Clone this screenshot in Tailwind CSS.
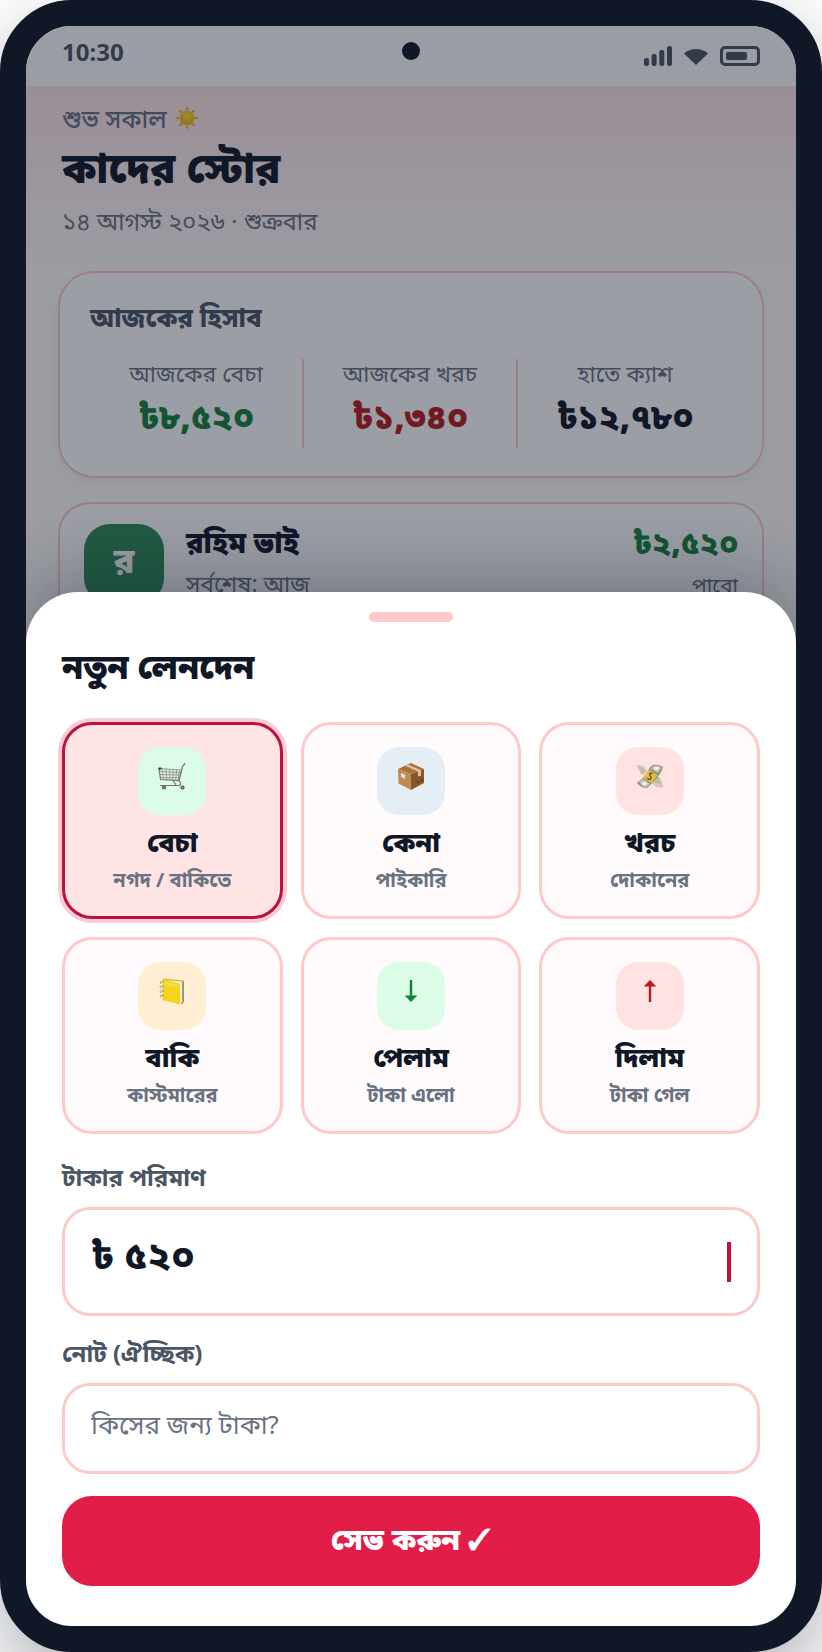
<!DOCTYPE html>
<html lang="bn">
<head>
<meta charset="utf-8">
<meta name="viewport" content="width=device-width, initial-scale=1">
<title>কাদের স্টোর</title>
<script src="https://cdn.jsdelivr.net/npm/@tailwindcss/browser@4"></script>
</head>
<body class="bg-white font-['Noto_Sans','Noto_Sans_Bengali',sans-serif] text-gray-900">
<div class="relative isolate grid min-h-screen overflow-hidden rounded-[72px] border-[26px] border-gray-900 bg-[#fffdfb] shadow-[0_30px_80px_rgba(17,24,39,0.35)]">

  <!-- Home screen -->
  <main class="col-start-1 row-start-1 flex min-w-0 flex-col">
    <div class="relative flex h-[60px] items-start justify-between bg-white/50 px-9 pt-3 text-gray-600">
      <span class="text-2xl leading-7 font-bold">10:30</span>
      <span class="absolute top-4 left-1/2 size-[18px] -translate-x-1/2 rounded-full bg-gray-900"></span>
      <span class="flex items-center gap-3 pt-2">
        <svg class="h-5 w-7" viewBox="0 0 28 20" fill="currentColor" aria-hidden="true"><rect x="0" y="12" width="5" height="8" rx="2"/><rect x="7.6" y="8" width="5" height="12" rx="2"/><rect x="15.3" y="4" width="5" height="16" rx="2"/><rect x="23" y="0" width="5" height="20" rx="2"/></svg>
        <svg class="h-5 w-6" viewBox="0 0 24 20" fill="currentColor" aria-hidden="true"><path d="M0 7.500Q5 3 12 3T24 7.500L12 19Z"/></svg>
        <svg class="h-5 w-10" viewBox="0 0 40 20" aria-hidden="true"><rect x="1.500" y="1.500" width="37" height="17" rx="3.500" fill="none" stroke="currentColor" stroke-width="3"/><rect x="6" y="6" width="21" height="8" rx="2" fill="currentColor"/></svg>
      </span>
    </div>

    <header class="bg-linear-to-b from-[#ffe4e6] to-transparent px-9 pt-3 pb-[30px]">
      <p class="flex items-center gap-2 text-[25px] leading-10 font-medium text-gray-500">শুভ সকাল
        <svg class="size-6" viewBox="0 0 24 24" role="img" aria-label="সূর্য"><defs><radialGradient id="sun" cx=".5" cy=".35" r=".6"><stop offset="0" stop-color="#ffe34a"/><stop offset="1" stop-color="#f5b400"/></radialGradient></defs><path fill="#f5a81c" d="M12 0l1.500 4h-3zM12 24l1.500-4h-3zM0 12l4-1.500v3zM24 12l-4-1.500v3zM3.500 3.500l4 1.800-2.200 2.200zM20.500 3.500l-4 1.800 2.200 2.200zM3.500 20.500l4-1.800-2.200-2.200zM20.500 20.500l-4-1.800 2.200-2.200z"/><circle cx="12" cy="12" r="7.300" fill="url(#sun)"/></svg>
      </p>
      <h1 class="text-[42px] leading-[58px] font-black">কাদের স্টোর</h1>
      <p class="mt-[5px] text-2xl leading-10 text-gray-500">১৪ আগস্ট ২০২৬ · শুক্রবার</p>
    </header>

    <section class="mx-8 rounded-[36px] border-2 border-red-200 bg-white px-[30px] pt-6 pb-7 shadow-[0_4px_12px_rgba(17,24,39,0.05)]">
      <h2 class="text-[26px] leading-10 font-extrabold text-gray-600">আজকের হিসাব</h2>
      <div class="mt-[22px] grid grid-cols-3 text-center">
        <div class="border-r-2 border-red-200 pb-[5px]">
          <p class="text-[23px] leading-7 text-gray-500">আজকের বেচা</p>
          <p class="mt-0.5 text-[34px] leading-[54px] font-black text-[#15803d]">৳৮,৫২০</p>
        </div>
        <div class="border-r-2 border-red-200 pb-[5px]">
          <p class="text-[23px] leading-7 text-gray-500">আজকের খরচ</p>
          <p class="mt-0.5 text-[34px] leading-[54px] font-black text-[#b91c1c]">৳১,৩৪০</p>
        </div>
        <div class="pb-[5px]">
          <p class="text-[23px] leading-7 text-gray-500">হাতে ক্যাশ</p>
          <p class="mt-0.5 text-[34px] leading-[54px] font-black">৳১২,৭৮০</p>
        </div>
      </div>
    </section>

    <section class="mx-8 mt-6 flex gap-[22px] rounded-[32px] border-2 border-red-200 bg-white px-6 py-5">
      <div class="flex size-20 shrink-0 items-center justify-center rounded-[26px] bg-[#2e8b57] pb-2 text-[34px] font-black text-white">র</div>
      <div class="flex-1">
        <p class="text-[29px] leading-9 font-black">রহিম ভাই</p>
        <p class="mt-[3px] text-[23px] leading-10 text-gray-500">সর্বশেষ: আজ</p>
      </div>
      <div class="text-right">
        <p class="text-[31px] leading-9 font-black text-[#15803d]">৳২,৫২০</p>
        <p class="mt-[5px] text-[21px] leading-10 text-gray-500">পাবো</p>
      </div>
    </section>
  </main>

  <!-- Backdrop -->
  <div class="absolute inset-0 bg-gray-900/42"></div>

  <!-- New transaction sheet -->
  <form class="relative z-10 col-start-1 row-start-1 flex min-w-0 flex-col self-end rounded-t-[52px] rounded-b-[46px] bg-white px-9 pt-5 pb-10 shadow-[0_-20px_60px_rgba(17,24,39,0.25)]">
    <div class="h-2.5 w-[84px] self-center rounded-full bg-red-200"></div>
    <h2 class="mt-4 text-[34px] leading-[56px] font-black">নতুন লেনদেন</h2>

    <div class="mt-7 grid grid-cols-3 gap-[18px]">
      <button type="button" aria-pressed="true" class="flex h-[197px] flex-col items-center rounded-[30px] border-3 border-[#be123c] bg-[#ffe4e6] pt-[22px] ring-4 ring-[#e11d48]/22">
        <span class="flex size-[68px] items-start justify-center rounded-[22px] bg-green-100 pt-[15px]">
          <svg class="size-7" viewBox="0 0 28 28" fill="none" aria-hidden="true"><path d="M1 6.500L24 8M1.500 9.500l22 1M2 12.500l21 .5M2 15.500l20 .3M4.500 6.700l1 11M8 7l.8 11M11.500 7.200l.5 11M15 7.400l-.2 11M18.500 7.600l-.8 10.800M21.500 8l-1.300 10" stroke="#8a8380" stroke-width=".8"/><path d="M1 6l1.500 11.500 18.500 1L24.500 4.500 27 1.500M21 18.500c2 1.500 2 4 .5 5L2 23.500M15 18.500l3 4.500" stroke="#77706e" stroke-width="1.200"/><path d="M.5 5.500h3v2h-3z" fill="#2b3444"/><circle cx="6" cy="25.500" r="2.100" fill="#5f5553"/><circle cx="24.500" cy="25.500" r="2.100" fill="#5f5553"/><circle cx="6" cy="25.500" r=".7" fill="#c9c2bf"/><circle cx="24.500" cy="25.500" r=".7" fill="#c9c2bf"/></svg>
        </span>
        <span class="mt-[7px] text-[27px] leading-10 font-black">বেচা</span>
        <span class="mt-0.5 text-xl leading-8 font-bold text-gray-500">নগদ / বাকিতে</span>
      </button>
      <button type="button" class="flex h-[197px] flex-col items-center rounded-[30px] border-3 border-red-200 bg-[#fffbfc] pt-[22px]">
        <span class="flex size-[68px] items-start justify-center rounded-[22px] bg-[#e5edf5] pt-[15px]">
          <svg class="size-7" viewBox="0 0 28 28" aria-hidden="true"><path fill="#c08a55" d="M1 7l13 5v16L1.500 21.500z"/><path fill="#8a5628" d="M14 12l13-5v14L14 28z"/><path fill="#a9713c" d="M1 7L14 1l13 6-13 5z"/><path fill="#dcc3a5" d="M8 3.800l13 5.800v5l3-1.200V8.300L11 2.500z"/><path fill="#e8e2da" d="M4 11l4 1.800v4L4 15z"/><path fill="#5c3717" d="M20 19.500l2-1v2l-2 1zM23.500 18l2-1v2l-2 1z"/></svg>
        </span>
        <span class="mt-[7px] text-[27px] leading-10 font-black">কেনা</span>
        <span class="mt-0.5 text-xl leading-8 font-bold text-gray-500">পাইকারি</span>
      </button>
      <button type="button" class="flex h-[197px] flex-col items-center rounded-[30px] border-3 border-red-200 bg-[#fffbfc] pt-[22px]">
        <span class="flex size-[68px] items-start justify-center rounded-[22px] bg-red-100 pt-[15px]">
          <svg class="size-7" viewBox="0 0 28 28" aria-hidden="true"><path fill="#cfc9b8" d="M1 3c4-1 8 1 10 6l-4 4C4 12 3 10 4 9 2 8 1.500 6 2.500 5.500 1 5 .5 4 1 3zM27 25c-4 1.500-8 .5-11-4l4-7c3 .5 5 2 4 3.500 2 .8 2.500 2.500 1.500 3.500 1.500.8 2 2.500 1.500 4z"/><path stroke="#9b9688" stroke-width=".6" fill="none" d="M3 5.500l6 3M4.500 9l4 1.500M25 21.500l-6-2.500M24 17.500l-4-1"/><path fill="#8d9180" d="M15 4q5-3 12 1-2 9-16 21-6 0-10-5 2-2 6-5Q12 10 15 4z"/><path fill="#c3c7b6" d="M16 4.500q5-2 9.500 1L22 11l-7-4zM3 20l4-3.500 7 5.500-4 3.500q-4-1-7-5.500z"/><ellipse cx="20.500" cy="6.300" rx="2.600" ry="1.700" fill="#f0f1e8"/><ellipse cx="8.500" cy="21.500" rx="2.600" ry="1.800" fill="#f0f1e8"/><path fill="#e9b83a" d="M12.500 7.500l9 5.500-1.500 2.200-9-5.500zM8.500 13.500l8.500 6-1.500 2-8.500-6z"/><path fill="#e5bf55" d="M11 9.700l9 5.500-3 4.300-8.500-6z"/><path stroke="#5b4a1a" stroke-width="1.300" fill="none" d="M16.500 11.500c-2-1-3.500.5-2.500 2s2 2.500.5 3.500-2.500 0-3-1"/></svg>
        </span>
        <span class="mt-[7px] text-[27px] leading-10 font-black">খরচ</span>
        <span class="mt-0.5 text-xl leading-8 font-bold text-gray-500">দোকানের</span>
      </button>
      <button type="button" class="flex h-[197px] flex-col items-center rounded-[30px] border-3 border-red-200 bg-[#fffbfc] pt-[22px]">
        <span class="flex size-[68px] items-start justify-center rounded-[22px] bg-orange-100 pt-[15px]">
          <svg class="size-7" viewBox="0 0 28 28" aria-hidden="true"><path fill="#b98f1d" d="M23 27.500L26 25V4l-3 1z"/><path fill="#e6e8ec" d="M6 2.500L25 4v20l-2 2z"/><path fill="#8f9db0" d="M24 4.500v20l1-1V4.300z"/><path fill="#d9b40c" d="M4.500 1.500L26 3.500v1L6 3z"/><path fill="#f3d51c" d="M4.500 2L22 7v20.500L4.500 23z"/><path fill="#fae75a" d="M6 4l14 4v3L6 7z" opacity=".5"/><path stroke="#8e8b7c" stroke-width="1" fill="none" d="M6 5.500C3 3.500 1 5.500 3 7M6 10C3 8 1 10 3 11.500M6 14.500c-3-2-5 0-3 1.500M6 19c-3-2-5 0-3 1.500"/></svg>
        </span>
        <span class="mt-[7px] text-[27px] leading-10 font-black">বাকি</span>
        <span class="mt-0.5 text-xl leading-8 font-bold text-gray-500">কাস্টমারের</span>
      </button>
      <button type="button" class="flex h-[197px] flex-col items-center rounded-[30px] border-3 border-red-200 bg-[#fffbfc] pt-[22px]">
        <span class="flex size-[68px] items-start justify-center rounded-[22px] bg-green-100 pt-[18px]">
          <svg class="h-[22px] w-3.5" viewBox="0 0 14 22" fill="#15803d" aria-hidden="true"><path d="M5.800 0h2.400v15.500H13.300L7 22 .7 15.500h5.100z"/></svg>
        </span>
        <span class="mt-[7px] text-[27px] leading-10 font-black">পেলাম</span>
        <span class="mt-0.5 text-xl leading-8 font-bold text-gray-500">টাকা এলো</span>
      </button>
      <button type="button" class="flex h-[197px] flex-col items-center rounded-[30px] border-3 border-red-200 bg-[#fffbfc] pt-[22px]">
        <span class="flex size-[68px] items-start justify-center rounded-[22px] bg-red-100 pt-[18px]">
          <svg class="h-[22px] w-3.5" viewBox="0 0 14 22" fill="#b91c1c" aria-hidden="true"><path d="M5.800 22h2.400V6.500H13.300L7 0 .7 6.500h5.100z"/></svg>
        </span>
        <span class="mt-[7px] text-[27px] leading-10 font-black">দিলাম</span>
        <span class="mt-0.5 text-xl leading-8 font-bold text-gray-500">টাকা গেল</span>
      </button>
    </div>

    <label for="amount" class="mt-[23px] text-2xl leading-10 font-bold text-gray-600">টাকার পরিমাণ</label>
    <div class="mt-2.5 flex h-[109px] items-center rounded-[28px] border-3 border-red-200 px-[26px]">
      <input id="amount" type="text" inputmode="numeric" value="৳ ৫২০" class="h-16 min-w-0 flex-1 pb-2.5 text-[38px] font-extrabold outline-none">
      <span class="h-10 w-1 bg-[#be123c]"></span>
    </div>

    <label for="note" class="mt-[17px] text-2xl leading-10 font-bold text-gray-600">নোট (ঐচ্ছিক)</label>
    <input id="note" type="text" placeholder="কিসের জন্য টাকা?" class="mt-2.5 h-[91px] min-w-0 rounded-[28px] border-3 border-red-200 px-[26px] pb-2.5 text-[26px] outline-none placeholder:text-gray-500">

    <button type="submit" class="mt-[22px] flex h-[90px] items-center justify-center gap-2 rounded-[30px] bg-[#e11d48] pb-1.5 text-[30px] font-black text-white">সেভ করুন <span>✓</span></button>
  </form>
</div>
</body>
</html>
